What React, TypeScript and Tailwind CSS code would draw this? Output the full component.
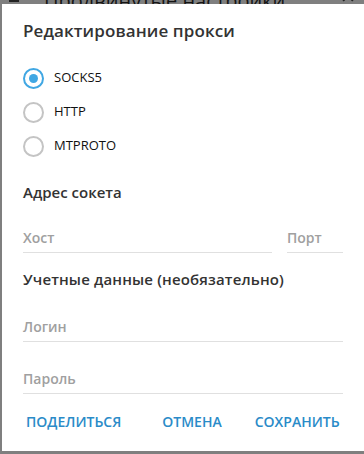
import React from "react";

function Radio({ checked, label }: { checked?: boolean; label: string }) {
  return (
    <div className="flex items-center h-[34px]">
      <div
        className={
          "w-[21px] h-[21px] rounded-full border-2 flex items-center justify-center " +
          (checked ? "border-[#40a7e3]" : "border-[#c4c4c4]")
        }
      >
        {checked && <div className="w-[9px] h-[9px] rounded-full bg-[#40a7e3]" />}
      </div>
      <span className="ml-[10px] text-[13px] text-[#111]">{label}</span>
    </div>
  );
}

function Field({ placeholder, className }: { placeholder: string; className?: string }) {
  return (
    <div className={"border-b border-[#e0e0e0] h-[32px] flex items-end pb-[7px] " + (className ?? "")}>
      <span className="text-[14px] font-semibold text-[#a0a0a0] leading-none">{placeholder}</span>
    </div>
  );
}

export default function App() {
  return (
    <div
      className="relative w-[364px] h-[454px] overflow-hidden bg-[#7f7f7f]"
      style={{ fontFamily: '"Open Sans", "Noto Sans", sans-serif' }}
    >
      {/* background content under overlay */}
      <div className="absolute left-[44px] top-[-14px] text-[20px] text-[#141414] whitespace-nowrap">
        Продвинутые настройки
      </div>
      <div className="absolute left-[9px] top-[-6px] w-[10px] h-[8px] border-b-2 border-[#222]" />
      <div className="absolute left-[344px] top-[-4px] w-[8px] h-[8px] border-l-2 border-t-2 border-[#222] rotate-45" />
      <div className="absolute left-[10px] top-[448px] text-[14px] text-[#141414] whitespace-nowrap">
        ● Автомат
      </div>

      {/* dialog */}
      <div className="absolute left-[2px] top-[4px] w-[364px] h-[447px] bg-white flex flex-col pl-[21px] pr-[23px]">
        <div className="mt-[16px] text-[17px] font-semibold text-[#333] leading-[22px] tracking-[0.1px]">
          Редактирование прокси
        </div>
        <div className="mt-[19px] flex flex-col">
          <Radio checked label="SOCKS5" />
          <Radio label="HTTP" />
          <Radio label="MTPROTO" />
        </div>
        <div className="mt-[19px] text-[15px] font-semibold text-[#333] leading-[20px]">
          Адрес сокета
        </div>
        <div className="mt-[19px] flex gap-[15px]">
          <Field placeholder="Хост" className="flex-1" />
          <Field placeholder="Порт" className="w-[56px]" />
        </div>
        <div className="mt-[16px] text-[15px] font-semibold text-[#333] leading-[20px] tracking-[0.15px]">
          Учетные данные (необязательно)
        </div>
        <div className="mt-[21px]">
          <Field placeholder="Логин" />
        </div>
        <div className="mt-[20px]">
          <Field placeholder="Пароль" />
        </div>
        <div className="mt-[18px] flex items-center text-[14px] font-semibold text-[#2a8bc8] uppercase leading-[20px]">
          <span className="ml-[3px]">Поделиться</span>
          <span className="ml-[41px]">Отмена</span>
          <span className="ml-[33px]">Сохранить</span>
        </div>
      </div>
    </div>
  );
}
